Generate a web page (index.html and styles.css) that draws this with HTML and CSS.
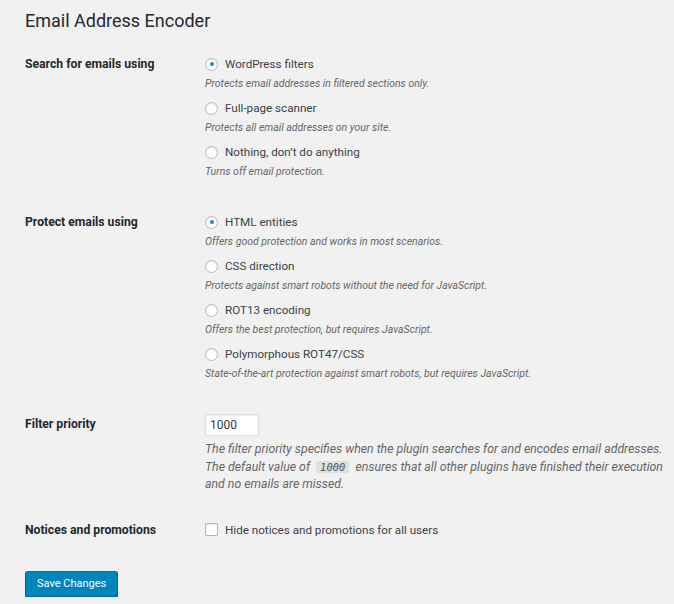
FILE: index.html
```html
<!DOCTYPE html>
<html lang="en">
<head>
<meta charset="utf-8">
<title>Email Address Encoder</title>
<link rel="stylesheet" href="styles.css">
</head>
<body>
<div class="wrap">
  <h1 class="title">Email Address Encoder</h1>
  <form class="form-table">
    <div class="row">
      <div class="th">Search for emails using</div>
      <div class="td">
        <label class="opt"><span class="radio checked"></span>WordPress filters</label>
        <p class="desc">Protects email addresses in filtered sections only.</p>
        <label class="opt"><span class="radio"></span>Full-page scanner</label>
        <p class="desc">Protects all email addresses on your site.</p>
        <label class="opt"><span class="radio"></span>Nothing, don’t do anything</label>
        <p class="desc">Turns off email protection.</p>
      </div>
    </div>
    <div class="row">
      <div class="th">Protect emails using</div>
      <div class="td">
        <label class="opt"><span class="radio checked"></span>HTML entities</label>
        <p class="desc">Offers good protection and works in most scenarios.</p>
        <label class="opt"><span class="radio"></span>CSS direction</label>
        <p class="desc">Protects against smart robots without the need for JavaScript.</p>
        <label class="opt"><span class="radio"></span>ROT13 encoding</label>
        <p class="desc">Offers the best protection, but requires JavaScript.</p>
        <label class="opt"><span class="radio"></span>Polymorphous ROT47/CSS</label>
        <p class="desc">State-of-the-art protection against smart robots, but requires JavaScript.</p>
      </div>
    </div>
    <div class="row row-priority">
      <div class="th">Filter priority</div>
      <div class="td">
        <div class="input">1000</div>
        <p class="desc desc-long">The filter priority specifies when the plugin searches for and encodes email addresses. The default value of <code>1000</code> ensures that all other plugins have finished their execution and no emails are missed.</p>
      </div>
    </div>
    <div class="row">
      <div class="th">Notices and promotions</div>
      <div class="td">
        <label class="opt"><span class="checkbox"></span>Hide notices and promotions for all users</label>
      </div>
    </div>
  </form>
  <div class="submit"><span class="button">Save Changes</span></div>
</div>
</body>
</html>
```

FILE: styles.css
```css
html, body {
  margin: 0;
  padding: 0;
  background: #f1f1f1;
}
body {
  font-family: Roboto, "Liberation Sans", sans-serif;
  color: #444;
  font-size: 12px;
}
.wrap {
  padding: 8px 0 0 25px;
}
.title {
  margin: 0;
  font-size: 18px;
  line-height: 25px;
  font-weight: 400;
  color: #23282d;
}
.form-table {
  margin-top: 5px;
}
.row {
  display: grid;
  grid-template-columns: 180px 1fr;
  padding: 16px 0;
}
.row-priority {
  padding-bottom: 10px;
}
.th {
  font-weight: 700;
  font-size: 12.2px;
  color: #23282d;
  line-height: 20px;
}
.td {
  display: flex;
  flex-direction: column;
  align-items: flex-start;
}
.opt {
  display: flex;
  align-items: center;
  line-height: 20px;
  font-size: 11.65px;
  color: #3c4146;
}
.desc + .opt {
  margin-top: 6px;
}
.desc {
  margin: 2px 0 0;
  font-size: 10.5px;
  line-height: 16px;
  font-style: italic;
  color: #666;
}
.desc-long {
  margin-top: 5px;
  font-size: 12.3px;
  line-height: 17.5px;
  max-width: 462px;
}
.radio, .checkbox {
  width: 11px;
  height: 11px;
  border: 1px solid #b4b9be;
  background: #fff;
  box-shadow: inset 0 1px 2px rgba(0,0,0,.1);
  margin-right: 7px;
  flex: none;
  display: flex;
  align-items: center;
  justify-content: center;
}
.radio {
  border-radius: 50%;
}
.radio.checked::after {
  content: "";
  width: 4px;
  height: 4px;
  border-radius: 50%;
  background: #1e8cbe;
}
.checkbox {
  border-radius: 1px;
}
.input {
  width: 44px;
  height: 20px;
  line-height: 20px;
  padding: 0 4px;
  border: 1px solid #ddd;
  background: #fff;
  box-shadow: inset 0 1px 2px rgba(0,0,0,.07);
  color: #32373c;
  font-size: 12px;
}
code {
  font-family: "DejaVu Sans Mono", monospace;
  font-size: 10.5px;
  font-style: italic;
  background: rgba(0,0,0,.07);
  padding: 0 4px;
  margin: 0 3px;
  color: #555;
}
.submit {
  padding: 15px 0 0;
}
.button {
  display: inline-block;
  height: 24px;
  line-height: 24px;
  padding: 0 11px;
  font-size: 11px;
  color: #fff;
  background: #0085ba;
  border: 1px solid #0073aa;
  border-color: #0073aa #006799 #006799;
  border-radius: 3px;
  box-shadow: 0 1px 0 #006799;
}
```
